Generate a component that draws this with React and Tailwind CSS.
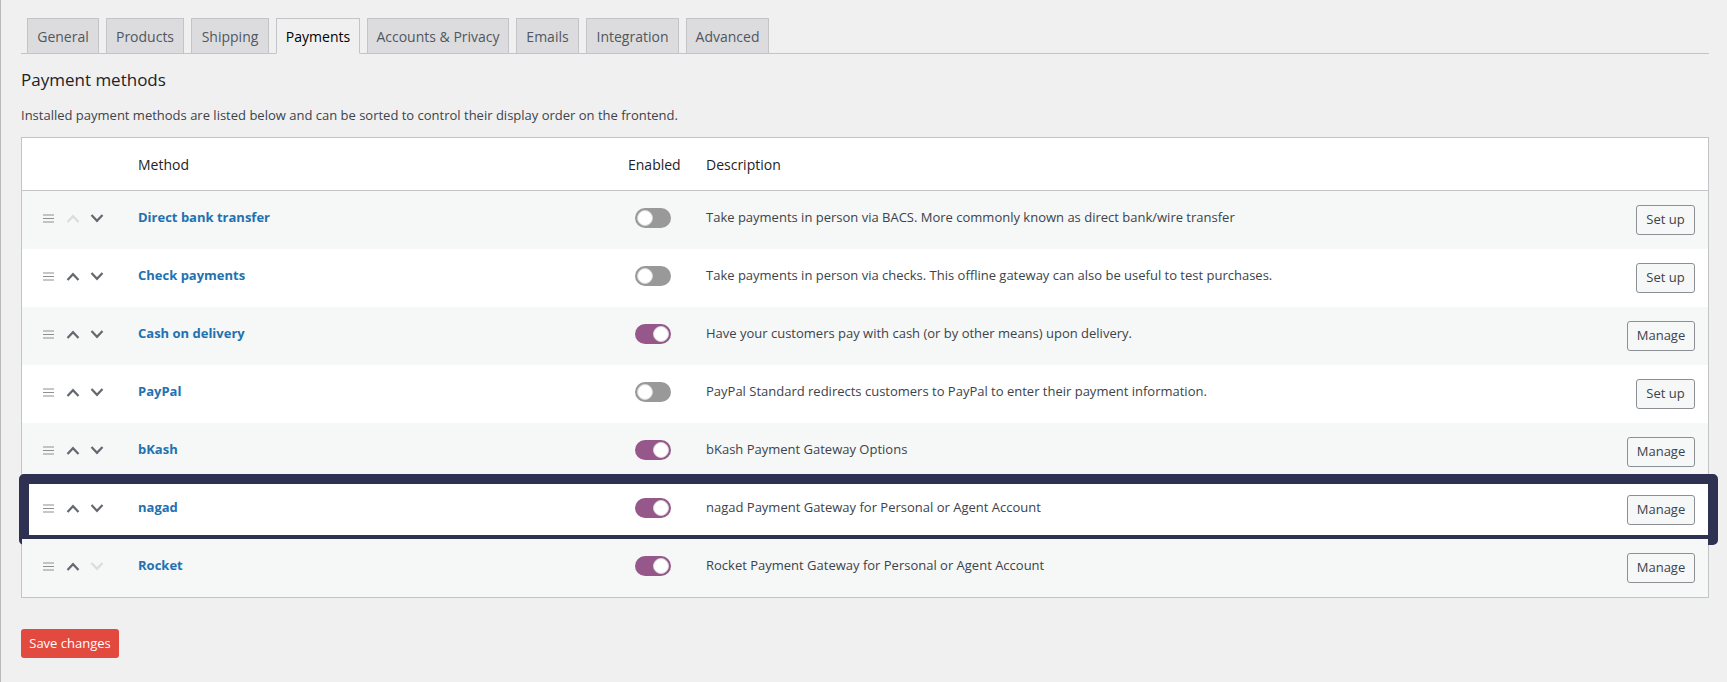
import React from 'react';

const tabs = [
  { label: 'General', w: 'w-[72px]' },
  { label: 'Products', w: 'w-[78px]' },
  { label: 'Shipping', w: 'w-[78px]' },
  { label: 'Payments', w: 'w-[84px]', active: true },
  { label: 'Accounts & Privacy', w: 'w-[142px]' },
  { label: 'Emails', w: 'w-[63px]' },
  { label: 'Integration', w: 'w-[93px]' },
  { label: 'Advanced', w: 'w-[83px]' },
];

const methods = [
  { name: 'Direct bank transfer', on: false, desc: 'Take payments in person via BACS. More commonly known as direct bank/wire transfer', action: 'Set up', upOff: true },
  { name: 'Check payments', on: false, desc: 'Take payments in person via checks. This offline gateway can also be useful to test purchases.', action: 'Set up' },
  { name: 'Cash on delivery', on: true, desc: 'Have your customers pay with cash (or by other means) upon delivery.', action: 'Manage' },
  { name: 'PayPal', on: false, desc: 'PayPal Standard redirects customers to PayPal to enter their payment information.', action: 'Set up' },
  { name: 'bKash', on: true, desc: 'bKash Payment Gateway Options', action: 'Manage' },
  { name: 'nagad', on: true, desc: 'nagad Payment Gateway for Personal or Agent Account', action: 'Manage', marked: true },
  { name: 'Rocket', on: true, desc: 'Rocket Payment Gateway for Personal or Agent Account', action: 'Manage', downOff: true },
];

function Grip() {
  return (
    <svg width="11" height="9" viewBox="0 0 11 9" className="shrink-0">
      <path d="M0 1h11M0 4.5h11M0 8h11" stroke="#8c8f94" strokeWidth="1.2" />
    </svg>
  );
}

function Chevron({ up, off }) {
  return (
    <svg width="14" height="9" viewBox="0 0 14 9" className="shrink-0">
      <polyline
        points={up ? '1.5,8 7,2.2 12.5,8' : '1.5,1 7,6.8 12.5,1'}
        fill="none"
        stroke={off ? '#dcdcde' : '#646970'}
        strokeWidth="2.2"
      />
    </svg>
  );
}

function Toggle({ on }) {
  return (
    <span
      className={
        on
          ? 'flex h-[20px] w-[36px] items-center justify-end rounded-full bg-[#96588a] px-[2px]'
          : 'flex h-[20px] w-[36px] items-center justify-start rounded-full bg-[#999999] px-[2px]'
      }
    >
      <span className="h-[16px] w-[16px] rounded-full border border-[#d5d5d5] bg-white" />
    </span>
  );
}

export default function App() {
  return (
    <div
      className="min-h-[682px] border-l border-[#b9b9b9] bg-[#f0f0f1] pl-[20px] pr-[18px] text-[13px] text-[#3c434a]"
      style={{ fontFamily: '"Open Sans", "Noto Sans", sans-serif' }}
    >
      <nav className="flex items-end gap-[7px] border-b border-[#c3c4c7] pl-[6px] pt-[18px]">
        {tabs.map((t) => (
          <span
            key={t.label}
            className={
              t.active
                ? `${t.w} -mb-px flex h-[36px] items-center justify-center border border-[#c3c4c7] border-b-[#f0f0f1] bg-[#f0f0f1] text-[14px] font-medium text-black`
                : `${t.w} -mb-px flex h-[36px] items-center justify-center border border-[#c3c4c7] bg-[#dcdcde] text-[14px] font-medium text-[#50575e]`
            }
          >
            {t.label}
          </span>
        ))}
      </nav>

      <h2 className="mt-[14px] text-[17px] font-medium leading-[24px] text-[#1d2327]">Payment methods</h2>
      <p className="mt-[13px] leading-[20px]">
        Installed payment methods are listed below and can be sorted to control their display order on the frontend.
      </p>

      <div className="mt-[12px] border border-[#c3c4c7] bg-white">
        <div className="flex h-[53px] items-center border-b border-[#c3c4c7] text-[14px] font-medium text-[#1d2327]">
          <div className="w-[116px] shrink-0" />
          <div className="w-[490px] shrink-0">Method</div>
          <div className="w-[78px] shrink-0">Enabled</div>
          <div className="flex-1">Description</div>
        </div>

        {methods.map((m, i) => (
          <div
            key={m.name}
            className={
              i % 2 === 0
                ? 'relative flex h-[58px] items-center bg-[#f6f7f7] pb-[4px]'
                : 'relative flex h-[58px] items-center bg-white pb-[4px]'
            }
          >
            <div className="flex w-[116px] shrink-0 items-center pl-[21px]">
              <Grip />
              <span className="ml-[12px]">
                <Chevron up off={m.upOff} />
              </span>
              <span className="ml-[10px]">
                <Chevron off={m.downOff} />
              </span>
            </div>
            <div className="w-[490px] shrink-0 font-bold text-[#2271b1]">{m.name}</div>
            <div className="w-[78px] shrink-0 pl-[7px]">
              <Toggle on={m.on} />
            </div>
            <div className="flex-1">{m.desc}</div>
            <div className="mt-[4px] pr-[13px]">
              <button
                className={
                  m.action === 'Manage'
                    ? 'h-[30px] w-[68px] rounded-[3px] border border-[#8c8f94] bg-[#f6f7f7] text-[13px] text-[#3c434a]'
                    : 'h-[30px] w-[59px] rounded-[3px] border border-[#8c8f94] bg-[#f6f7f7] text-[13px] text-[#3c434a]'
                }
              >
                {m.action}
              </button>
            </div>
            {m.marked && (
              <div className="pointer-events-none absolute left-[-3px] top-[-7px] h-[71px] w-[1699px] rounded-[5px] border-[10px] border-[#2f3152]" />
            )}
          </div>
        ))}
      </div>

      <button className="mt-[31px] h-[29px] w-[98px] rounded-[3px] bg-[#e2493f] text-[13px] text-white">
        Save changes
      </button>
    </div>
  );
}
